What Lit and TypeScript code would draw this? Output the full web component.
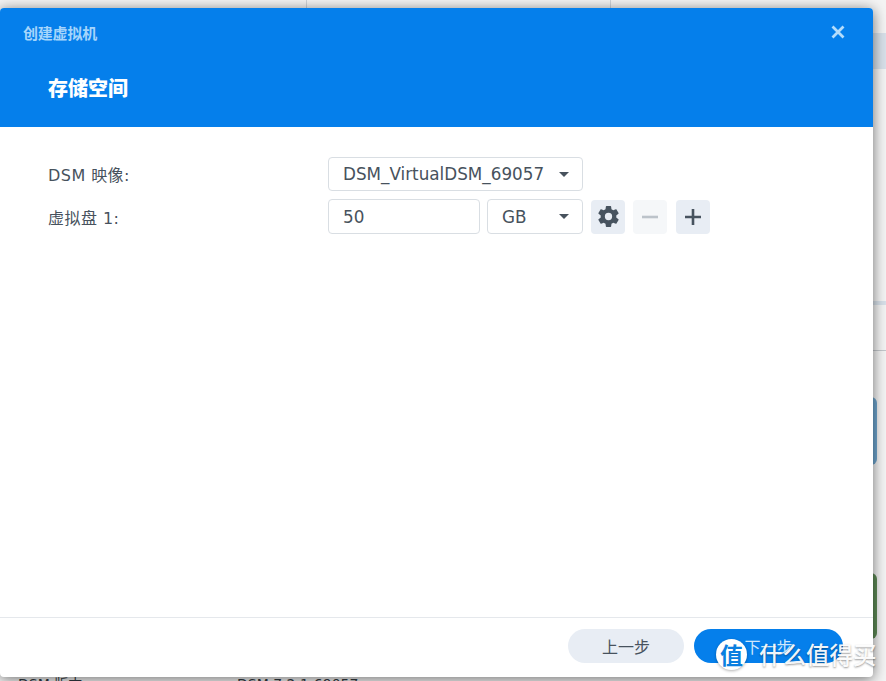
import { LitElement, html, css } from "lit";
import { customElement } from "lit/decorators.js";

const GEAR = "M12,15.5A3.5,3.5 0 0,1 8.5,12A3.5,3.5 0 0,1 12,8.5A3.5,3.5 0 0,1 15.5,12A3.5,3.5 0 0,1 12,15.5M19.43,12.97C19.47,12.65 19.5,12.33 19.5,12C19.5,11.67 19.47,11.34 19.43,11L21.54,9.37C21.73,9.22 21.78,8.95 21.66,8.73L19.66,5.27C19.54,5.05 19.27,4.96 19.05,5.05L16.56,6.05C16.04,5.66 15.5,5.32 14.87,5.07L14.5,2.42C14.46,2.18 14.25,2 14,2H10C9.75,2 9.54,2.18 9.5,2.42L9.13,5.07C8.5,5.32 7.96,5.66 7.44,6.05L4.95,5.05C4.73,4.96 4.46,5.05 4.34,5.27L2.34,8.73C2.21,8.95 2.27,9.22 2.46,9.37L4.57,11C4.53,11.34 4.5,11.67 4.5,12C4.5,12.33 4.53,12.65 4.57,12.97L2.46,14.63C2.27,14.78 2.21,15.05 2.34,15.27L4.34,18.73C4.46,18.95 4.73,19.03 4.95,18.95L7.44,17.94C7.96,18.34 8.5,18.68 9.13,18.93L9.5,21.58C9.54,21.82 9.75,22 10,22H14C14.25,22 14.46,21.82 14.5,21.58L14.87,18.93C15.5,18.67 16.04,18.34 16.56,17.94L19.05,18.95C19.27,19.03 19.54,18.95 19.66,18.73L21.66,15.27C21.78,15.05 21.73,14.78 21.54,14.63L19.43,12.97Z";

@customElement("app-root")
export class AppRoot extends LitElement {
  static styles = css`
    :host {
      display: block;
      position: relative;
      width: 886px;
      height: 681px;
      overflow: hidden;
      background: #f4f4f4;
      font-family: "DejaVu Sans", "Noto Sans CJK SC", sans-serif;
      color: #47525d;
    }
    .bg { position: absolute; }
    .vline { top: 0; width: 1px; height: 8px; background: #cfd3d8; }
    .v1 { left: 306px; }
    .v2 { left: 610px; }
    .band { left: 873px; width: 13px; background: #d8e1ea; }
    .b1 { top: 33px; height: 36px; }
    .b2 { top: 301px; height: 4px; }
    .hline { left: 873px; width: 13px; top: 350px; height: 1px; background: #c4c8cc; }
    .chip { left: 868px; width: 9px; border-radius: 0 6px 6px 0; }
    .blue { top: 397px; height: 68px; background: #6ea6cf; }
    .green { top: 573px; height: 66px; background: #5f8c57; }
    .under {
      top: 676px;
      font-size: 14px;
      line-height: 16px;
      color: #333a42;
    }
    .u1 { left: 18px; }
    .u2 { left: 237px; }

    .dialog {
      position: absolute;
      left: 0;
      top: 8px;
      width: 873px;
      height: 669px;
      display: flex;
      flex-direction: column;
      background: #fff;
      border-radius: 4px;
      box-shadow: 0 2px 14px rgba(0, 0, 0, 0.55);
    }
    .head {
      height: 119px;
      box-sizing: border-box;
      background: #057feb;
      border-radius: 4px 4px 0 0;
      display: flex;
      flex-direction: column;
    }
    .topline {
      display: flex;
      justify-content: space-between;
      align-items: center;
      height: 48px;
      padding: 0 27px 0 23px;
    }
    .app {
      font-family: "Noto Sans CJK SC", sans-serif;
      font-size: 15px;
      font-weight: 700;
      color: #a5d5fb;
      letter-spacing: -0.2px;
    }
    .close { width: 16px; height: 16px; display: block; }
    .title {
      margin: 16px 0 0 48px;
      font-family: "Noto Sans CJK SC", sans-serif;
      font-size: 20px;
      line-height: 32px;
      font-weight: 900;
      color: #fff;
    }
    .body {
      flex: 1;
      padding: 30px 0 0 48px;
      display: flex;
      flex-direction: column;
      gap: 8px;
    }
    .row { display: flex; align-items: center; }
    .label { width: 280px; font-size: 16px; letter-spacing: 0.45px; }
    .fields { display: flex; gap: 8px; align-items: center; }
    .field {
      box-sizing: border-box;
      height: 34px;
      border: 1px solid #d9dee3;
      border-radius: 4px;
      padding: 0 14px;
      display: flex;
      align-items: center;
      justify-content: space-between;
      font-size: 16.8px;
      background: #fff;
    }
    .row2 .field { height: 35px; }
    .row2 { height: 35px; }
    .s-image { width: 255px; }
    .i-size { width: 152px; margin-right: -1px; }
    .s-unit { width: 96px; }
    .caret {
      width: 0;
      height: 0;
      border-left: 5.5px solid transparent;
      border-right: 5.5px solid transparent;
      border-top: 5px solid #47525d;
      margin-right: -1px;
    }
    .icon-btn {
      width: 34px;
      height: 34px;
      border-radius: 4px;
      background: #e8edf4;
      display: flex;
      align-items: center;
      justify-content: center;
    }
    .icon-btn.off { background: #f5f7f9; }
    .icon-btn.plus { margin-left: 1px; }
    .icon-btn svg { display: block; }
    .foot {
      box-sizing: border-box;
      height: 60px;
      border-top: 1px solid #e5e8ec;
      display: flex;
      justify-content: flex-end;
      padding: 11px 30px 0 0;
      gap: 10px;
    }
    .btn {
      height: 34px;
      border-radius: 17px;
      display: flex;
      align-items: center;
      justify-content: center;
      font-family: "Noto Sans CJK SC", sans-serif;
      font-size: 16px;
    }
    .prev { width: 116px; background: #e8edf4; color: #47525d; }
    .next { width: 149px; background: #057feb; color: #cfe7fb; }

    .mark {
      position: absolute;
      left: 716px;
      top: 639px;
      display: flex;
      align-items: center;
      gap: 12px;
    }
    .mark-c {
      width: 31px;
      height: 31px;
      border-radius: 50%;
      background: #fff;
      color: #0a7fe0;
      font-family: "Noto Sans CJK SC", sans-serif;
      font-weight: 700;
      font-size: 23px;
      line-height: 31px;
      text-align: center;
      box-shadow: 0 1px 3px rgba(0, 0, 0, 0.3);
    }
    .mark-t {
      font-family: "Noto Sans CJK SC", sans-serif;
      font-size: 23.5px;
      font-weight: 500;
      line-height: 31px;
      color: rgba(255, 255, 255, 0.95);
      text-shadow: 0 1px 2px rgba(0, 0, 0, 0.4);
      white-space: nowrap;
    }
  `;

  render() {
    return html`
      <div class="bg vline v1"></div>
      <div class="bg vline v2"></div>
      <div class="bg band b1"></div>
      <div class="bg band b2"></div>
      <div class="bg hline"></div>
      <div class="bg chip blue"></div>
      <div class="bg chip green"></div>
      <div class="bg under u1">DSM 版本</div>
      <div class="bg under u2">DSM 7.2.1-69057</div>

      <div class="dialog">
        <div class="head">
          <div class="topline">
            <span class="app">创建虚拟机</span>
            <svg class="close" viewBox="0 0 16 16">
              <path d="M2.5 2.5L13.5 13.5M13.5 2.5L2.5 13.5" stroke="#b4dcfb" stroke-width="2.8" fill="none" />
            </svg>
          </div>
          <div class="title">存储空间</div>
        </div>
        <div class="body">
          <div class="row">
            <div class="label">DSM 映像:</div>
            <div class="fields">
              <div class="field s-image"><span>DSM_VirtualDSM_69057</span><i class="caret"></i></div>
            </div>
          </div>
          <div class="row row2">
            <div class="label">虚拟盘 1:</div>
            <div class="fields">
              <div class="field i-size">50</div>
              <div class="field s-unit"><span>GB</span><i class="caret"></i></div>
              <div class="icon-btn">
                <svg width="25" height="25" viewBox="0 0 24 24"><path d="${GEAR}" fill="#47535f" /></svg>
              </div>
              <div class="icon-btn off">
                <svg width="18" height="18" viewBox="0 0 18 18"><path d="M1 9H17" stroke="#bcc3ca" stroke-width="2.6" /></svg>
              </div>
              <div class="icon-btn plus">
                <svg width="18" height="18" viewBox="0 0 18 18"><path d="M1 9H17M9 1V17" stroke="#47535f" stroke-width="2.6" /></svg>
              </div>
            </div>
          </div>
        </div>
        <div class="foot">
          <div class="btn prev">上一步</div>
          <div class="btn next">下一步</div>
        </div>
      </div>

      <div class="mark">
        <div class="mark-c">值</div>
        <div class="mark-t">什么值得买</div>
      </div>
    `;
  }
}
